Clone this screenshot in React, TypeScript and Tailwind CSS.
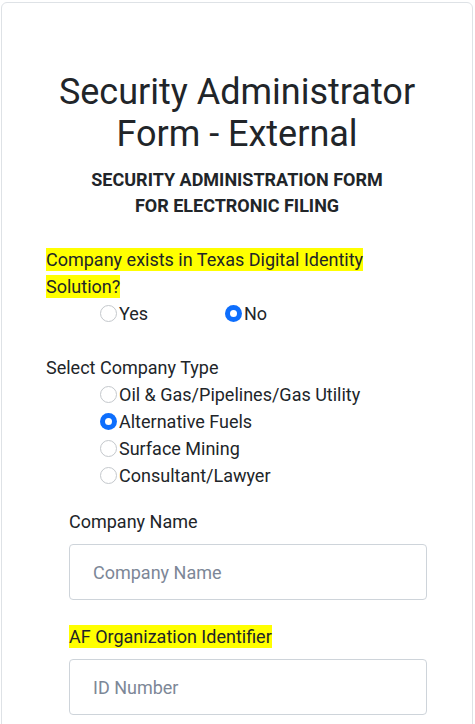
import { useState } from 'react'

function Radio({ checked, label, onClick }: { checked: boolean; label: string; onClick: () => void }) {
  return (
    <label className="flex items-center cursor-pointer" onClick={onClick}>
      {checked ? (
        <span className="w-[17px] h-[17px] rounded-full bg-[#0d6efd] flex items-center justify-center">
          <span className="w-[7px] h-[7px] rounded-full bg-white" />
        </span>
      ) : (
        <span className="w-[17px] h-[17px] rounded-full border border-[#c4c8cc] bg-white" />
      )}
      <span className="ml-[2px]">{label}</span>
    </label>
  )
}

export default function App() {
  const [exists, setExists] = useState('no')
  const [companyType, setCompanyType] = useState('af')

  const types = [
    { value: 'oil', label: 'Oil & Gas/Pipelines/Gas Utility' },
    { value: 'af', label: 'Alternative Fuels' },
    { value: 'mining', label: 'Surface Mining' },
    { value: 'lawyer', label: 'Consultant/Lawyer' },
  ]

  return (
    <div className="min-h-screen bg-white pl-px pt-0.5" style={{ fontFamily: 'Roboto, "Liberation Sans", sans-serif' }}>
      <div className="w-[472px] min-h-[740px] border border-[#dee2e6] rounded-[6px] bg-white text-[#212529]">
        {/* Header */}
        <div className="pt-[68px] text-center">
          <h1 className="text-[36px] leading-[42px] font-normal">
            Security Administrator
            <br />
            Form - External
          </h1>
          <h2 className="mt-[12px] text-[18px] leading-[26px] font-bold uppercase">
            Security Administration Form
            <br />
            for Electronic Filing
          </h2>
        </div>

        <div className="px-[44px] mt-[27px] text-[18px] leading-[27px]">
          {/* Company exists */}
          <div>
            <span className="bg-[#ffff00] py-px box-decoration-clone">
              Company exists in Texas Digital Identity Solution?
            </span>
          </div>
          <div className="flex pl-[54px]">
            <div className="w-[125px]">
              <Radio checked={exists === 'yes'} label="Yes" onClick={() => setExists('yes')} />
            </div>
            <Radio checked={exists === 'no'} label="No" onClick={() => setExists('no')} />
          </div>

          {/* Company type */}
          <div className="mt-[27px]">Select Company Type</div>
          <div className="pl-[54px]">
            {types.map(t => (
              <Radio
                key={t.value}
                checked={companyType === t.value}
                label={t.label}
                onClick={() => setCompanyType(t.value)}
              />
            ))}
          </div>

          {/* Company Name */}
          <div className="pl-[23px] mt-[19px]">
            <label className="block">Company Name</label>
            <input
              type="text"
              placeholder="Company Name"
              className="mt-[9px] w-[358px] h-[56px] border border-[#ced4da] rounded-[4px] px-[23px] text-[18px] placeholder:text-[#7d8797] outline-none"
            />

            <label className="block mt-[23px]">
              <span className="bg-[#ffff00] py-px">AF Organization Identifier</span>
            </label>
            <input
              type="text"
              placeholder="ID Number"
              className="mt-[9px] w-[358px] h-[56px] border border-[#ced4da] rounded-[4px] px-[23px] text-[18px] placeholder:text-[#7d8797] outline-none"
            />
          </div>
        </div>
      </div>
    </div>
  )
}
